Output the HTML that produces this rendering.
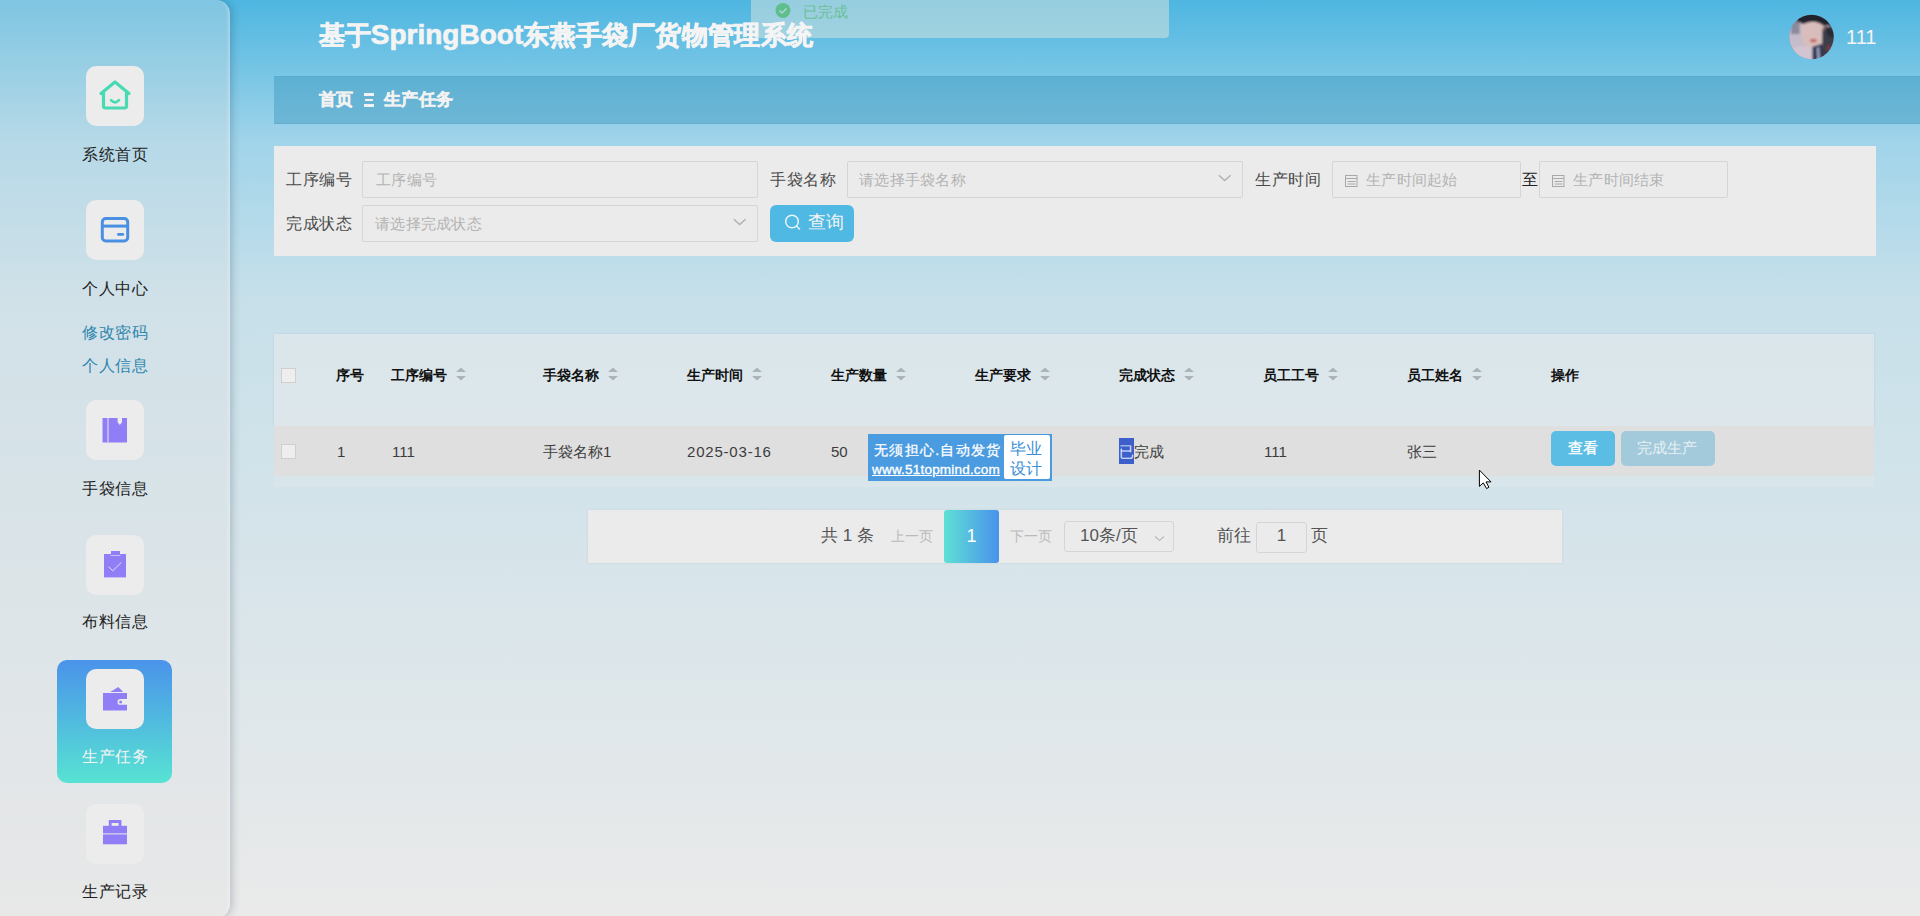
<!DOCTYPE html>
<html><head><meta charset="utf-8">
<style>
*{margin:0;padding:0;box-sizing:border-box;}
html,body{width:1920px;height:916px;overflow:hidden;}
.wrap{position:absolute;left:0;top:0;width:1920px;height:916px;overflow:hidden;}
body{position:relative;font-family:"Liberation Sans",sans-serif;
background:linear-gradient(180deg,#4eb6e1 0px,#76c5e5 70px,#a0d4ea 140px,#c7e0ea 300px,#d8e5ea 580px,#eaeaea 916px);}
.abs{position:absolute;white-space:nowrap;}
svg{position:absolute;overflow:visible;}
.side{position:absolute;left:0;top:0;width:230px;height:918px;border-radius:0 14px 14px 0;
background:rgba(229,229,229,0.33);box-shadow:2px 0 8px rgba(0,30,50,0.22),inset -4px 0 3px -2px rgba(255,255,255,0.25);}
.ib{position:absolute;left:86px;width:58px;height:60px;border-radius:10px;background:#ececec;}
.ml{position:absolute;left:0;width:230px;text-align:center;font-size:16px;color:#222;line-height:20px;letter-spacing:0.5px;text-indent:0.5px;}
.sub{position:absolute;left:0;width:230px;text-align:center;font-size:16px;color:#2f86ae;line-height:20px;letter-spacing:0.5px;text-indent:0.5px;}
.act{position:absolute;left:57px;top:660px;width:115px;height:123px;border-radius:10px;
background:linear-gradient(180deg,#4a93ea,#57e3d3);}
.title{position:absolute;left:319px;top:15px;font-size:26px;font-weight:bold;color:#f4f4f4;line-height:40px;white-space:nowrap;-webkit-text-stroke:0.7px #f4f4f4;}
.title .lt{font-size:28px;margin-left:-1px;letter-spacing:0px;}
.title .cj{letter-spacing:0.4px;}
.toast{position:absolute;left:751px;top:-10px;width:418px;height:48px;border-radius:4px;background:rgba(222,230,222,0.5);}
.bc{position:absolute;left:274px;top:76px;width:1646px;height:48px;background:rgba(60,150,190,0.45);box-shadow:inset 0 -1px 0 rgba(40,110,140,0.12),inset 0 1px 0 rgba(40,110,140,0.08);}
.bct{position:absolute;top:88px;font-size:17px;font-weight:bold;color:#f2f2f2;line-height:24px;white-space:nowrap;-webkit-text-stroke:0.5px #f2f2f2;letter-spacing:0.4px;}
.sp{position:absolute;left:274px;top:146px;width:1602px;height:110px;background:#ebebeb;}
.lab{position:absolute;font-size:16px;color:#4a4a4a;line-height:20px;white-space:nowrap;letter-spacing:0.5px;}
.inp{position:absolute;height:37px;border:1px solid #d5d5d5;border-radius:2px;background:#ebebeb;}
.ph{position:absolute;font-size:15px;color:#b3b3b3;line-height:20px;white-space:nowrap;letter-spacing:0.3px;}
.tbl{position:absolute;left:274px;top:334px;width:1600px;height:92px;background:rgba(236,236,236,0.5);box-shadow:0 0 2px rgba(120,150,170,0.25);}
.tbot{position:absolute;left:274px;top:476px;width:1600px;height:11px;background:rgba(236,236,236,0.25);}
.tr{position:absolute;left:274px;top:426px;width:1600px;height:50px;background:#dfdfdf;}
.h{position:absolute;top:366px;font-size:14px;font-weight:bold;color:#111;line-height:18px;white-space:nowrap;}
.d{position:absolute;top:441.5px;font-size:15px;color:#3c3c3c;line-height:20px;white-space:nowrap;}
.cb{position:absolute;width:15px;height:15px;border:1px solid #cfcfcf;border-radius:0;background:#eeeeee;}
.pg{position:absolute;left:588px;top:510px;width:974px;height:53px;background:#ebebeb;box-shadow:0 0 2px rgba(150,170,180,0.3);}
</style></head>
<body>
<div class="side"></div>

<div class="ib" style="top:66px"></div>
<svg style="left:0;top:0" width="1" height="1"><g fill="none" stroke="#48dab3" stroke-width="3.2" stroke-linecap="round" stroke-linejoin="round">
<path d="M101,93.5 L115,82 L129,93.5"/><path d="M103.5,93 V106 Q103.5,108 105.5,108 H124.5 Q126.5,108 126.5,106 V93"/></g>
<path d="M111,100.2 Q115,104.5 119,100.2" fill="none" stroke="#48dab3" stroke-width="2.6" stroke-linecap="round"/></svg>
<div class="ml" style="top:145px">系统首页</div>

<div class="ib" style="top:200px"></div>
<svg style="left:0;top:0" width="1" height="1"><rect x="102.3" y="218.5" width="25.4" height="22.5" rx="3.5" fill="none" stroke="#4a90e2" stroke-width="3"/>
<rect x="102" y="224.6" width="26" height="3" fill="#4a90e2"/><rect x="117" y="233" width="7.2" height="2.8" rx="1.4" fill="#4a90e2"/></svg>
<div class="ml" style="top:279px">个人中心</div>
<div class="sub" style="top:323px">修改密码</div>
<div class="sub" style="top:356px">个人信息</div>

<div class="ib" style="top:400px"></div>
<svg style="left:0;top:0" width="1" height="1"><path d="M102.5,418 H117.6 V422.3 L119.8,425 L122,422.3 V418 H127 V442.4 H102.5 Z" fill="#8f7ef5"/>
<rect x="107.5" y="418" width="1" height="24.4" fill="#ece9fb"/></svg>
<div class="ml" style="top:479px">手袋信息</div>

<div class="ib" style="top:535px"></div>
<svg style="left:0;top:0" width="1" height="1"><rect x="104" y="554" width="22" height="23.4" fill="#8f7ef5"/><rect x="111" y="551" width="9" height="4" fill="#8f7ef5"/><rect x="110.5" y="555.2" width="10" height="0.8" fill="#d8d2f6"/>
<path d="M108.5,566.6 L112.7,570.8 L121.4,562.4" fill="none" stroke="#e6e0fb" stroke-width="1"/></svg>
<div class="ml" style="top:612px">布料信息</div>

<div class="act"></div>
<div class="ib" style="top:669px"></div>
<svg style="left:0;top:0" width="1" height="1"><path d="M110.2,692 L118.3,687 L123.2,692 Z" fill="#8f7ef5"/>
<path d="M103,693 H127 V699 H120.4 A2.9,2.9 0 0 0 120.4,704.8 H127 V710.4 H103 Z" fill="#8f7ef5"/><circle cx="120.6" cy="701.9" r="1.5" fill="#8f7ef5"/></svg>
<div class="ml" style="top:747px;color:#f4f4f4">生产任务</div>

<div class="ib" style="top:804px"></div>
<svg style="left:0;top:0" width="1" height="1"><path d="M108.8,826 V820 H121.4 V826 H118.6 V823 H111.6 V826 Z" fill="#8f7ef5"/>
<rect x="103" y="825.8" width="24" height="7.6" fill="#8f7ef5"/><rect x="103" y="834.4" width="24" height="9.9" fill="#8f7ef5"/></svg>
<div class="ml" style="top:882px">生产记录</div>

<div class="toast"></div>
<svg style="left:0;top:0" width="1" height="1"><circle cx="783" cy="10.5" r="7.5" fill="#5fbf8c"/><path d="M779.5,10.5 L782,13 L786.5,8.5" fill="none" stroke="#a9d8d8" stroke-width="1.5"/></svg>
<div class="abs" style="left:803px;top:2px;font-size:15px;color:#6cbf95;line-height:20px">已完成</div>
<div class="title"><span class="cj">基于</span><span class="lt">SpringBoot</span><span class="cj">东燕手袋厂货物管理系统</span></div>

<svg style="left:1788.5px;top:14px" width="45" height="46" viewBox="0 0 46 46"><defs><clipPath id="av"><circle cx="23" cy="23" r="22.7"/></clipPath><filter id="bl" x="-10%" y="-10%" width="120%" height="120%"><feGaussianBlur stdDeviation="1.3"/></filter></defs>
<g clip-path="url(#av)"><rect width="46" height="46" fill="#8c8a9c"/><g filter="url(#bl)">
<rect x="-2" y="-2" width="18" height="50" fill="#c4bccb"/>
<rect x="2" y="6" width="9" height="14" fill="#8a8a9c"/>
<path d="M12,8 Q26,4 40,12 L40,30 Q30,38 20,36 Q12,30 12,8 Z" fill="#d9bdbc"/>
<path d="M4,34 Q14,30 24,34 L26,48 L2,48 Z" fill="#d2c4d0"/>
<path d="M24,33 L34,30 L36,48 L24,48 Z" fill="#2c3452"/>
<path d="M28,34 L31,33 L32,48 L29,48 Z" fill="#9a9cb4"/>
<path d="M34,16 L48,14 L48,48 L34,48 Z" fill="#3c3c4a"/>
<path d="M38,32 L48,31 L48,36 L38,37 Z" fill="#6a3c44"/>
<path d="M8,-2 H48 V16 Q42,8 36,12 Q26,4 14,10 Q10,6 8,8 Z" fill="#22222e"/>
<path d="M36,12 L48,14 L48,24 L40,22 Z" fill="#2a2a38"/>
<ellipse cx="25" cy="26.5" rx="3.5" ry="1.8" fill="#c8625a"/>
<ellipse cx="36" cy="14.5" rx="2" ry="1.2" fill="#6a5050"/>
</g></g></svg>
<div class="abs" style="left:1846px;top:24px;font-size:20px;color:#f4f4f4;line-height:26px">111</div>

<div class="bc"></div>
<div class="bct" style="left:319px">首页</div>
<div class="abs" style="left:364px;top:93px;width:10px;height:2.5px;background:#f2f2f2"></div>
<div class="abs" style="left:365px;top:98.5px;width:8px;height:2.5px;background:#f2f2f2"></div>
<div class="abs" style="left:364px;top:104px;width:10px;height:2.5px;background:#f2f2f2"></div>
<div class="bct" style="left:384px">生产任务</div>

<div class="sp"></div>
<div class="lab" style="left:286px;top:170px">工序编号</div>
<div class="inp" style="left:362px;top:161px;width:396px"></div>
<div class="ph" style="left:376px;top:170px">工序编号</div>
<div class="lab" style="left:770px;top:170px">手袋名称</div>
<div class="inp" style="left:847px;top:161px;width:396px"></div>
<div class="ph" style="left:859px;top:170px">请选择手袋名称</div>
<svg style="left:0;top:0" width="1" height="1"><path d="M1218.8,175.3 L1224.7,180.5 L1230.6,175.3" fill="none" stroke="#b0b0b0" stroke-width="1.4"/></svg>
<div class="lab" style="left:1255px;top:170px">生产时间</div>
<div class="inp" style="left:1332px;top:161px;width:189px"></div>
<svg style="left:0;top:0" width="1" height="1"><g fill="none" stroke="#a8a8a8" stroke-width="1"><rect x="1345.5" y="175.5" width="11.5" height="11"/><path d="M1346,178.5 H1357 M1347.5,181.5 H1355.5 M1347.5,184 H1355.5"/></g></svg>
<div class="ph" style="left:1366px;top:170px">生产时间起始</div>
<div class="lab" style="left:1522px;top:170px;color:#222">至</div>
<div class="inp" style="left:1539px;top:161px;width:189px"></div>
<svg style="left:0;top:0" width="1" height="1"><g fill="none" stroke="#a8a8a8" stroke-width="1"><rect x="1552.5" y="175.5" width="11.5" height="11"/><path d="M1553,178.5 H1564 M1554.5,181.5 H1562.5 M1554.5,184 H1562.5"/></g></svg>
<div class="ph" style="left:1573px;top:170px">生产时间结束</div>
<div class="lab" style="left:286px;top:214px">完成状态</div>
<div class="inp" style="left:362px;top:205px;width:396px"></div>
<div class="ph" style="left:375px;top:214px">请选择完成状态</div>
<svg style="left:0;top:0" width="1" height="1"><path d="M733.8,219.3 L739.7,224.5 L745.6,219.3" fill="none" stroke="#b0b0b0" stroke-width="1.4"/></svg>
<div class="abs" style="left:770px;top:205px;width:84px;height:37px;border-radius:6px;background:#4fb8e3"></div>
<svg style="left:0;top:0" width="1" height="1"><circle cx="792" cy="221.5" r="6.3" fill="none" stroke="#e8f6fb" stroke-width="1.5"/><path d="M796.5,226 L800,229.5" stroke="#e8f6fb" stroke-width="1.5"/></svg>
<div class="abs" style="left:808px;top:211px;font-size:18px;color:#f4f4f4;line-height:22px">查询</div>

<div class="tbl"></div>
<div class="tbot"></div>
<div class="tr"></div>
<div class="cb" style="left:281px;top:368px"></div>
<div class="cb" style="left:281px;top:444px"></div>
<div class="h" style="left:336px">序号</div>
<div class="h" style="left:391px">工序编号</div>
<div class="h" style="left:543px">手袋名称</div>
<div class="h" style="left:687px">生产时间</div>
<div class="h" style="left:831px">生产数量</div>
<div class="h" style="left:975px">生产要求</div>
<div class="h" style="left:1119px">完成状态</div>
<div class="h" style="left:1263px">员工工号</div>
<div class="h" style="left:1407px">员工姓名</div>
<div class="h" style="left:1551px">操作</div>
<svg style="left:0;top:0" width="1" height="1"><g fill="#adb4b9">
<path d="M456,372 L461,367.5 L466,372 Z M456,376 L461,380.5 L466,376 Z"/>
<path d="M608,372 L613,367.5 L618,372 Z M608,376 L613,380.5 L618,376 Z"/>
<path d="M752,372 L757,367.5 L762,372 Z M752,376 L757,380.5 L762,376 Z"/>
<path d="M896,372 L901,367.5 L906,372 Z M896,376 L901,380.5 L906,376 Z"/>
<path d="M1040,372 L1045,367.5 L1050,372 Z M1040,376 L1045,380.5 L1050,376 Z"/>
<path d="M1184,372 L1189,367.5 L1194,372 Z M1184,376 L1189,380.5 L1194,376 Z"/>
<path d="M1328,372 L1333,367.5 L1338,372 Z M1328,376 L1333,380.5 L1338,376 Z"/>
<path d="M1472,372 L1477,367.5 L1482,372 Z M1472,376 L1477,380.5 L1482,376 Z"/>
</g></svg>
<div class="d" style="left:337px">1</div>
<div class="d" style="left:392px">111</div>
<div class="d" style="left:543px">手袋名称1</div>
<div class="d" style="left:687px;letter-spacing:0.8px">2025-03-16</div>
<div class="d" style="left:831px">50</div>
<div class="abs" style="left:868px;top:434px;width:184px;height:47px;background:#4a9be0"></div>
<div class="abs" style="left:1004px;top:435px;width:46px;height:44px;background:#fff;border-radius:2px"></div>
<div class="abs" style="left:874px;top:440px;font-size:14px;color:#fff;line-height:20px;letter-spacing:1.3px;-webkit-text-stroke:0.3px #fff">无须担心.自动发货</div>
<div class="abs" style="left:872px;top:461px;font-size:13.5px;color:#fff;line-height:18px;text-decoration:underline;letter-spacing:0.2px;-webkit-text-stroke:0.35px #fff">www.51topmind.com</div>
<div class="abs" style="left:1010px;top:439px;font-size:16px;color:#3a8fd6;line-height:19.5px;white-space:normal;width:34px">毕业<br>设计</div>
<div class="abs" style="left:1119px;top:438px;width:15px;height:26px;background:#3c5fc9"></div>
<div class="d" style="left:1119px"><span style="color:#e0e8ff">已</span>完成</div>
<div class="d" style="left:1264px">111</div>
<div class="d" style="left:1407px">张三</div>
<div class="abs" style="left:1551px;top:431px;width:64px;height:35px;border-radius:5px;background:#5bbde3"></div>
<div class="abs" style="left:1568px;top:438px;font-size:15px;color:#fff;line-height:20px;-webkit-text-stroke:0.3px #fff">查看</div>
<div class="abs" style="left:1621px;top:431px;width:94px;height:35px;border-radius:5px;background:#a3cadb"></div>
<div class="abs" style="left:1637px;top:438px;font-size:15px;color:#e8f0f3;line-height:20px">完成生产</div>

<div class="pg"></div>
<div class="abs" style="left:821px;top:526px;font-size:17px;color:#555;line-height:20px">共 1 条</div>
<div class="abs" style="left:891px;top:527px;font-size:14px;color:#bbb;line-height:18px">上一页</div>
<div class="abs" style="left:944px;top:510px;width:55px;height:53px;border-radius:3px;background:linear-gradient(90deg,#5fe0d5,#4992eb)"></div>
<div class="abs" style="left:944px;top:526px;width:55px;text-align:center;font-size:18px;color:#fff;line-height:20px">1</div>
<div class="abs" style="left:1010px;top:527px;font-size:14px;color:#bbb;line-height:18px">下一页</div>
<div class="abs" style="left:1064px;top:521px;width:110px;height:31px;border:1px solid #d5d5d5;border-radius:3px"></div>
<div class="abs" style="left:1080px;top:526px;font-size:17px;color:#555;line-height:20px">10条/页</div>
<svg style="left:0;top:0" width="1" height="1"><path d="M1155,536.5 L1159.5,540.5 L1164,536.5" fill="none" stroke="#bbb" stroke-width="1.2"/></svg>
<div class="abs" style="left:1217px;top:526px;font-size:17px;color:#555;line-height:20px">前往</div>
<div class="abs" style="left:1256px;top:522px;width:51px;height:31px;border:1px solid #d5d5d5;border-radius:3px"></div>
<div class="abs" style="left:1256px;top:526px;width:51px;text-align:center;font-size:17px;color:#555;line-height:20px">1</div>
<div class="abs" style="left:1311px;top:526px;font-size:17px;color:#555;line-height:20px">页</div>

<svg style="left:0;top:0" width="1" height="1"><path d="M1479.4,470.1 V486.4 L1483.3,482.9 L1486.6,488.6 L1488.9,487.2 L1486,481.9 H1491 Z" fill="#fff" stroke="#000" stroke-width="1" stroke-linejoin="round"/></svg>
</body></html>
